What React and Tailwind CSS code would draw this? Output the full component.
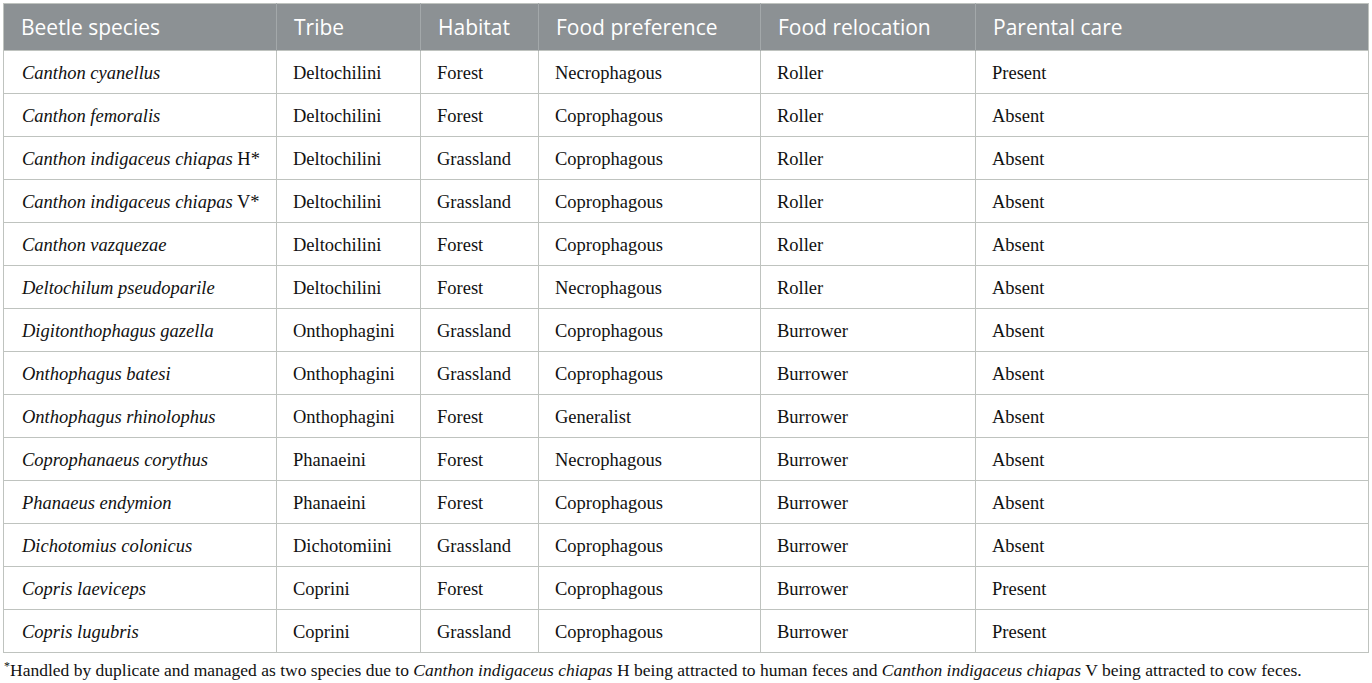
const rows = [
  ["Canthon cyanellus", "", "Deltochilini", "Forest", "Necrophagous", "Roller", "Present"],
  ["Canthon femoralis", "", "Deltochilini", "Forest", "Coprophagous", "Roller", "Absent"],
  ["Canthon indigaceus chiapas", " H*", "Deltochilini", "Grassland", "Coprophagous", "Roller", "Absent"],
  ["Canthon indigaceus chiapas", " V*", "Deltochilini", "Grassland", "Coprophagous", "Roller", "Absent"],
  ["Canthon vazquezae", "", "Deltochilini", "Forest", "Coprophagous", "Roller", "Absent"],
  ["Deltochilum pseudoparile", "", "Deltochilini", "Forest", "Necrophagous", "Roller", "Absent"],
  ["Digitonthophagus gazella", "", "Onthophagini", "Grassland", "Coprophagous", "Burrower", "Absent"],
  ["Onthophagus batesi", "", "Onthophagini", "Grassland", "Coprophagous", "Burrower", "Absent"],
  ["Onthophagus rhinolophus", "", "Onthophagini", "Forest", "Generalist", "Burrower", "Absent"],
  ["Coprophanaeus corythus", "", "Phanaeini", "Forest", "Necrophagous", "Burrower", "Absent"],
  ["Phanaeus endymion", "", "Phanaeini", "Forest", "Coprophagous", "Burrower", "Absent"],
  ["Dichotomius colonicus", "", "Dichotomiini", "Grassland", "Coprophagous", "Burrower", "Absent"],
  ["Copris laeviceps", "", "Coprini", "Forest", "Coprophagous", "Burrower", "Present"],
  ["Copris lugubris", "", "Coprini", "Grassland", "Coprophagous", "Burrower", "Present"],
];

const headers = ["Beetle species", "Tribe", "Habitat", "Food preference", "Food relocation", "Parental care"];
const widths = ["w-[273px]", "w-[144px]", "w-[118px]", "w-[222px]", "w-[215px]", "w-[393px]"];

export default function App() {
  return (
    <div className="bg-white w-[1372px] h-[683px] pt-[3px] pl-[3px]">
      <table className="table-fixed border-collapse w-[1366px] border border-[#bfc3bf]">
        <thead>
          <tr className="bg-[#8c9194] h-[47px]">
            {headers.map((h, i) => (
              <th
                key={h}
                className={`${widths[i]} text-left font-normal text-white text-[21px] pl-[17px] pt-[2px] border-l border-[#a3a8aa] first:border-l-0 align-middle`}
                style={{ fontFamily: '"Open Sans", sans-serif' }}
              >
                {h}
              </th>
            ))}
          </tr>
        </thead>
        <tbody className="text-[#111] text-[18.5px]" style={{ fontFamily: '"Liberation Serif", serif' }}>
          {rows.map((r, idx) => (
            <tr key={idx} className="h-[43px] border-t border-[#bfc3bf]">
              <td className="pl-[18px] pt-[3px] border-r border-[#bfc3bf]">
                <i>{r[0]}</i>
                {r[1]}
              </td>
              {r.slice(2).map((c, j) => (
                <td key={j} className="pl-[16px] pt-[3px] border-r border-[#bfc3bf]">
                  {c}
                </td>
              ))}
            </tr>
          ))}
        </tbody>
      </table>
      <p className="text-[17.5px] text-[#111] pl-[1px] mt-[4px]" style={{ fontFamily: '"Liberation Serif", serif' }}>
        <sup className="text-[12px]">*</sup>Handled by duplicate and managed as two species due to <i>Canthon indigaceus chiapas</i> H being attracted to human feces and <i>Canthon indigaceus chiapas</i> V being attracted to cow feces.
      </p>
    </div>
  );
}
